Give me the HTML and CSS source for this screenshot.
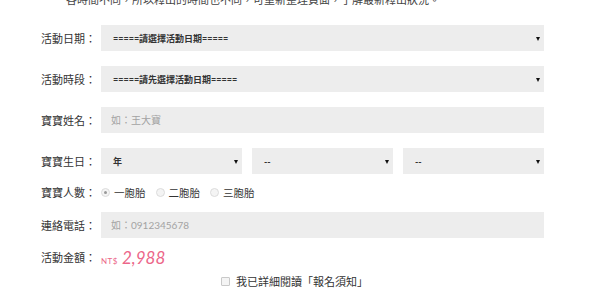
FILE: index.html
```html
<!DOCTYPE html>
<html lang="zh-Hant">
<head>
  <meta charset="UTF-8">
  <meta name="viewport" content="width=device-width, initial-scale=1.0">
  <title>活動報名</title>
  <link rel="stylesheet" href="styles.css">
</head>
<body>
  <p class="notice">各時間不同，所以釋出的時間也不同，可重新整理頁面，了解最新釋出狀況。</p>

  <form class="signup">
    <div class="row">
      <label class="label">活動日期：</label>
      <div class="select-wrap">
        <select>
          <option>=====請選擇活動日期=====</option>
        </select>
      </div>
    </div>

    <div class="row">
      <label class="label">活動時段：</label>
      <div class="select-wrap">
        <select>
          <option>=====請先選擇活動日期=====</option>
        </select>
      </div>
    </div>

    <div class="row">
      <label class="label">寶寶姓名：</label>
      <input type="text" class="field" placeholder="如：王大寶">
    </div>

    <div class="row row-tight">
      <label class="label">寶寶生日：</label>
      <div class="birthday">
        <div class="select-wrap"><select><option>年</option></select></div>
        <div class="select-wrap"><select><option>--</option></select></div>
        <div class="select-wrap"><select><option>--</option></select></div>
      </div>
    </div>

    <div class="row row-radio">
      <label class="label">寶寶人數：</label>
      <div class="choices">
        <label class="choice"><span class="radio checked"></span>一胞胎</label>
        <label class="choice"><span class="radio"></span>二胞胎</label>
        <label class="choice"><span class="radio"></span>三胞胎</label>
      </div>
    </div>

    <div class="row row-phone">
      <label class="label">連絡電話：</label>
      <input type="text" class="field" placeholder="如：0912345678">
    </div>

    <div class="row row-price">
      <label class="label">活動金額：</label>
      <div class="price"><span class="currency">NT$</span><span class="amount">2,988</span></div>
    </div>

    <div class="agree">
      <span class="checkbox"></span>我已詳細閱讀「報名須知」
    </div>
  </form>
</body>
</html>
```

FILE: styles.css
```css
body {
  margin: 0;
  font-family: Lato, "Noto Sans CJK TC", sans-serif;
  color: #333;
  background: #fff;
  overflow: hidden;
}
.notice {
  margin: -7px 0 0;
  padding-left: 66px;
  font-size: 11px;
  line-height: 14px;
  color: #444;
}
.signup {
  width: 504px;
  padding: 18px 0 0 40px;
}
.row {
  display: flex;
  align-items: center;
  margin-bottom: 15px;
}
.row-tight {
  margin-bottom: 8px;
}
.row-radio {
  height: 20px;
  margin-bottom: 10px;
}
.row-phone {
  margin-bottom: 7px;
}
.row-price {
  height: 24px;
  margin-bottom: 4px;
}
.label {
  width: 61px;
  flex: none;
  padding-left: 1px;
  box-sizing: border-box;
  font-size: 11px;
  color: #333;
  white-space: nowrap;
}
.select-wrap {
  position: relative;
  flex: 1;
}
.select-wrap::after {
  content: "";
  position: absolute;
  right: 4px;
  top: 12px;
  border-left: 2.5px solid transparent;
  border-right: 2.5px solid transparent;
  border-top: 4px solid #111;
  pointer-events: none;
}
select {
  -webkit-appearance: none;
  appearance: none;
  display: block;
  width: 100%;
  height: 26px;
  border: none;
  border-radius: 0;
  background: #ededed;
  padding: 0 0 0 12px;
  font-family: Lato, "Noto Sans CJK TC", sans-serif;
  font-size: 9px;
  font-weight: bold;
  color: #333;
  outline: none;
}
.field {
  flex: 1;
  height: 26px;
  border: none;
  background: #ededed;
  padding: 0 0 0 10px;
  font-family: Lato, "Noto Sans CJK TC", sans-serif;
  font-size: 10px;
  color: #333;
  outline: none;
}
.field::placeholder {
  color: #a3a3a3;
}
.birthday {
  flex: 1;
  display: flex;
  gap: 10px;
}
.choices {
  display: flex;
  gap: 10px;
}
.choice {
  display: flex;
  align-items: center;
  font-size: 10.5px;
  color: #333;
}
.radio {
  width: 7px;
  height: 7px;
  margin-right: 4px;
  border: 1px solid #dcdcdc;
  border-radius: 50%;
  background: #f4f4f4;
  position: relative;
}
.radio.checked::after {
  content: "";
  position: absolute;
  left: 2px;
  top: 2px;
  width: 3px;
  height: 3px;
  border-radius: 50%;
  background: #999;
}
.price {
  display: flex;
  align-items: baseline;
  color: #ec6689;
}
.currency {
  font-size: 8px;
  letter-spacing: 0.5px;
  margin-right: 4px;
}
.amount {
  font-size: 17px;
  font-style: italic;
}
.agree {
  display: flex;
  align-items: center;
  height: 16px;
  padding-left: 181px;
  font-size: 11px;
  color: #333;
}
.checkbox {
  width: 7px;
  height: 7px;
  margin-right: 6px;
  border: 1px solid #c9c9c9;
  border-radius: 1px;
  background: #f4f4f4;
}
```
